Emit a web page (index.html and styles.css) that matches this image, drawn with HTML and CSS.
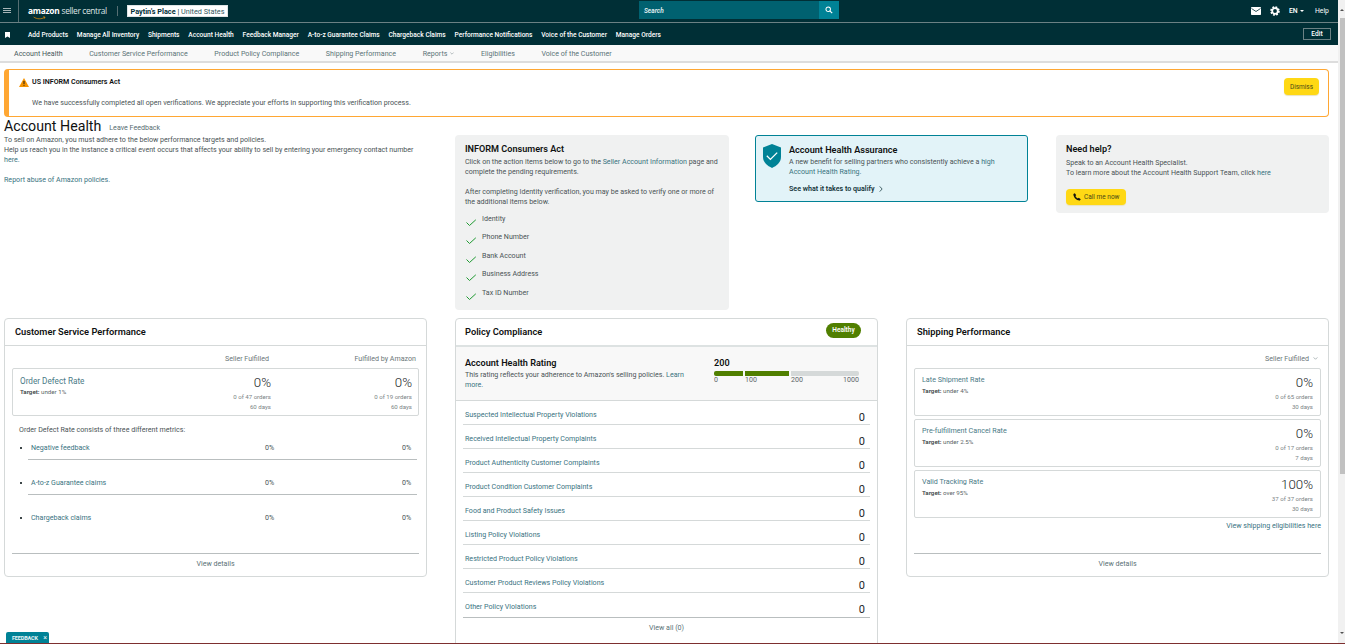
FILE: index.html
```html
<!DOCTYPE html>
<html lang="en">
<head>
<meta charset="utf-8">
<title>Account Health</title>
<link rel="stylesheet" href="styles.css">
</head>
<body>
<div class="screen">
  <div class="viewport">
    <div class="page">
      <header class="topbar">
        <div class="burger"><span></span><span></span><span></span></div>
        <div class="logo">
          <span class="logo-amazon">amazon</span><span class="logo-seller">seller central</span>
          <svg class="smile" viewBox="0 0 20 5"><path d="M1 1c5 3.500 12 3.500 17 .5M15.500 .8l3 .2-1 2.500" fill="none" stroke="#f90" stroke-width="1"/></svg>
        </div>
        <div class="store"><b>Paytin's Place</b> | <span>United States</span></div>
        <div class="search"><span class="search-text">Search</span>
          <span class="search-btn"><svg viewBox="0 0 10 10" width="8" height="8"><circle cx="4" cy="4" r="2.800" fill="none" stroke="#fff" stroke-width="1.300"/><path d="M6 6l3 3" stroke="#fff" stroke-width="1.500"/></svg></span>
        </div>
        <div class="tools">
          <svg class="mail" viewBox="0 0 10 8" width="10" height="8"><rect width="10" height="8" rx=".8" fill="#fff"/><path d="M.5 1.500L5 4.500l4.500-3" fill="none" stroke="#002f36" stroke-width=".8"/></svg>
          <svg class="gear" viewBox="0 0 10 10" width="10" height="10"><circle cx="5" cy="5" r="3.900" fill="none" stroke="#fff" stroke-width="1.800" stroke-dasharray="1.800 1.260"/><circle cx="5" cy="5" r="2.800" fill="none" stroke="#fff" stroke-width="1.800"/></svg>
          <span class="lang">EN<i class="caret"></i></span>
          <span class="help">Help</span>
        </div>
      </header>
      <nav class="mainnav">
        <svg class="bookmark" viewBox="0 0 5 6" width="5" height="6"><path d="M0 0h5v6L2.500 4.500 0 6z" fill="#fff"/></svg>
        <a>Add Products</a><a>Manage All Inventory</a><a>Shipments</a><a>Account Health</a><a>Feedback Manager</a><a>A-to-z Guarantee Claims</a><a>Chargeback Claims</a><a>Performance Notifications</a><a>Voice of the Customer</a><a>Manage Orders</a>
        <span class="edit">Edit</span>
      </nav>
      <nav class="subnav">
        <a class="current">Account Health</a><a>Customer Service Performance</a><a>Product Policy Compliance</a><a>Shipping Performance</a><a class="reports">Reports<svg viewBox="0 0 6 4" width="4" height="3"><path d="M.5 .5L3 3 5.500 .5" fill="none" stroke="#7a8a8c" stroke-width=".8"/></svg></a><a>Eligibilities</a><a>Voice of the Customer</a>
      </nav>

      <section class="alert">
        <div class="alert-main">
          <div class="alert-title">
            <svg viewBox="0 0 10 9" width="10" height="9"><path d="M5 0l5 9H0z" fill="#f59300"/><path d="M5 3v3M5 6.800v1" stroke="#111" stroke-width=".9"/></svg>
            <b>US INFORM Consumers Act</b>
          </div>
          <p>We have successfully completed all open verifications. We appreciate your efforts in supporting this verification process.</p>
        </div>
        <button class="yellow-btn dismiss">Dismiss</button>
      </section>

      <section class="top-row">
        <div class="intro">
          <div class="intro-head"><h1>Account Health</h1><a class="link-muted">Leave Feedback</a></div>
          <p>To sell on Amazon, you must adhere to the below performance targets and policies.</p>
          <p>Help us reach you in the instance a critical event occurs that affects your ability to sell by entering your emergency contact number <a class="link">here.</a></p>
          <p class="spaced"><a class="link">Report abuse of Amazon policies.</a></p>
        </div>

        <div class="panel inform">
          <h2>INFORM Consumers Act</h2>
          <p>Click on the action items below to go to the <a class="link">Seller Account Information</a> page and complete the pending requirements.</p>
          <p class="spaced">After completing Identity verification, you may be asked to verify one or more of the additional items below.</p>
          <ul class="checks">
            <li><svg viewBox="0 0 10 7" width="10" height="7"><path d="M.5 3.500l3 3L9.800 .8" fill="none" stroke="#1f9a32" stroke-width="1"/></svg><a>Identity</a></li>
            <li><svg viewBox="0 0 10 7" width="10" height="7"><path d="M.5 3.500l3 3L9.800 .8" fill="none" stroke="#1f9a32" stroke-width="1"/></svg><a>Phone Number</a></li>
            <li><svg viewBox="0 0 10 7" width="10" height="7"><path d="M.5 3.500l3 3L9.800 .8" fill="none" stroke="#1f9a32" stroke-width="1"/></svg><a>Bank Account</a></li>
            <li><svg viewBox="0 0 10 7" width="10" height="7"><path d="M.5 3.500l3 3L9.800 .8" fill="none" stroke="#1f9a32" stroke-width="1"/></svg><a>Business Address</a></li>
            <li><svg viewBox="0 0 10 7" width="10" height="7"><path d="M.5 3.500l3 3L9.800 .8" fill="none" stroke="#1f9a32" stroke-width="1"/></svg><a>Tax ID Number</a></li>
          </ul>
        </div>

        <div class="assurance">
          <svg class="shield" viewBox="0 0 18 24" width="18" height="24"><path d="M9 0l9 3.500V13c0 5.500-4.500 8.800-9 11-4.500-2.200-9-5.500-9-11V3.500z" fill="#008296"/><path d="M3.800 11.800l3.600 3.600 6.800-6.800" fill="none" stroke="#fff" stroke-width="1.300"/></svg>
          <div class="assurance-body">
            <h2>Account Health Assurance</h2>
            <p>A new benefit for selling partners who consistently achieve a <a class="link">high Account Health Rating.</a></p>
            <a class="qualify">See what it takes to qualify<svg viewBox="0 0 5 8" width="4" height="6"><path d="M.8 .5L4 4 .8 7.500" fill="none" stroke="#12333a" stroke-width="1"/></svg></a>
          </div>
        </div>

        <div class="panel need-help">
          <h2>Need help?</h2>
          <p>Speak to an Account Health Specialist.</p>
          <p>To learn more about the Account Health Support Team, click <a class="link">here</a></p>
          <button class="yellow-btn call"><svg viewBox="0 0 10 10" width="8" height="8"><path d="M2.300 .3L.5 1.400C.3 5.500 4.500 9.800 8.600 9.500l1.100-1.800-2.500-1.700-1.100 1C4.800 6.500 3.500 5.200 3 3.900l1-1.100z" fill="#111"/></svg>Call me now</button>
        </div>
      </section>

      <section class="cards">
        <article class="card">
          <h3 class="card-head">Customer Service Performance</h3>
          <div class="card-body">
            <div class="col-heads"><span class="col-a">Seller Fulfilled</span><span class="col-b">Fulfilled by Amazon</span></div>
            <div class="box odr">
              <div class="box-name"><a class="metric-name">Order Defect Rate</a><div class="target"><b>Target:</b> under 1%</div></div>
              <div class="stat col-stat-a"><div class="big">0%</div><div class="small">0 of 47 orders</div><div class="small">60 days</div></div>
              <div class="stat col-stat-b"><div class="big">0%</div><div class="small">0 of 19 orders</div><div class="small">60 days</div></div>
            </div>
            <p class="consists">Order Defect Rate consists of three different metrics:</p>
            <ul class="sub-metrics">
              <li><a class="link">Negative feedback</a><span class="pct-a">0%</span><span class="pct-b">0%</span></li>
              <li><a class="link">A-to-z Guarantee claims</a><span class="pct-a">0%</span><span class="pct-b">0%</span></li>
              <li><a class="link">Chargeback claims</a><span class="pct-a">0%</span><span class="pct-b">0%</span></li>
            </ul>
          </div>
          <a class="card-foot">View details</a>
        </article>

        <article class="card card-tall">
          <div class="card-head head-policy"><h3>Policy Compliance</h3><span class="pill">Healthy</span></div>
          <div class="rating">
            <div class="rating-text"><h4>Account Health Rating</h4><p>This rating reflects your adherence to Amazon's selling policies. <a class="link">Learn more.</a></p></div>
            <div class="rating-meter">
              <b>200</b>
              <div class="bar"><i class="seg seg1"></i><i class="seg seg2"></i><i class="seg seg3"></i></div>
              <div class="bar-labels"><span class="l1">0</span><span class="l2">100</span><span class="l3">200</span><span class="l4">1000</span></div>
            </div>
          </div>
          <ul class="violations">
            <li><a class="link">Suspected Intellectual Property Violations</a><span>0</span></li>
            <li><a class="link">Received Intellectual Property Complaints</a><span>0</span></li>
            <li><a class="link">Product Authenticity Customer Complaints</a><span>0</span></li>
            <li><a class="link">Product Condition Customer Complaints</a><span>0</span></li>
            <li><a class="link">Food and Product Safety Issues</a><span>0</span></li>
            <li><a class="link">Listing Policy Violations</a><span>0</span></li>
            <li><a class="link">Restricted Product Policy Violations</a><span>0</span></li>
            <li><a class="link">Customer Product Reviews Policy Violations</a><span>0</span></li>
            <li><a class="link">Other Policy Violations</a><span>0</span></li>
          </ul>
          <a class="card-foot">View all (0)</a>
        </article>

        <article class="card">
          <h3 class="card-head">Shipping Performance</h3>
          <div class="card-body ship-body">
            <div class="ship-filter">Seller Fulfilled<svg viewBox="0 0 6 4" width="5" height="3"><path d="M.5 .5L3 3 5.500 .5" fill="none" stroke="#7a8a8c" stroke-width=".8"/></svg></div>
            <div class="box ship">
              <div class="box-name"><a class="metric-name">Late Shipment Rate</a><div class="target"><b>Target:</b> under 4%</div></div>
              <div class="stat"><div class="big">0%</div><div class="small">0 of 65 orders</div><div class="small">30 days</div></div>
            </div>
            <div class="box ship">
              <div class="box-name"><a class="metric-name">Pre-fulfillment Cancel Rate</a><div class="target"><b>Target:</b> under 2.5%</div></div>
              <div class="stat"><div class="big">0%</div><div class="small">0 of 17 orders</div><div class="small">7 days</div></div>
            </div>
            <div class="box ship">
              <div class="box-name"><a class="metric-name">Valid Tracking Rate</a><div class="target"><b>Target:</b> over 95%</div></div>
              <div class="stat"><div class="big">100%</div><div class="small">37 of 37 orders</div><div class="small">30 days</div></div>
            </div>
            <a class="link ship-link">View shipping eligibilities here</a>
          </div>
          <a class="card-foot">View details</a>
        </article>
      </section>
    </div>
    <div class="scrollbar"><i class="arrow-up"></i><i class="thumb"></i><i class="arrow-down"></i></div>
  </div>
  <div class="bottom-line"></div>
  <div class="feedback-tab"><b>FEEDBACK</b><span>×</span></div>
</div>
</body>
</html>
```
FILE: styles.css
```css
* { box-sizing: border-box; }
html, body { margin: 0; height: 100%; overflow: hidden; background: #fff; }
body { font: 7.1px/10px Roboto, "Noto Sans", Arial, sans-serif; color: #4a5456; }
p, h1, h2, h3, h4, ul { margin: 0; padding: 0; }
ul { list-style: none; }
a { color: inherit; text-decoration: none; }
button { font-family: inherit; border: 0; padding: 0; }
.screen { height: 644px; display: flex; flex-direction: column; }
.viewport { flex: 1; min-height: 0; display: flex; overflow: hidden; }
.page { width: 1338px; flex: none; overflow: hidden; }
.bottom-line { height: 1px; flex: none; background: #7d2f2f; }

.scrollbar { flex: 1; background: #f1f1f1; display: flex; flex-direction: column; align-items: flex-end; position: relative; }
.thumb { display: block; width: 5px; height: 456px; margin-top: 18px; background: #c1c1c1; }
.arrow-up, .arrow-down { position: absolute; right: 1px; width: 0; height: 0; border-left: 2px solid transparent; border-right: 2px solid transparent; }
.arrow-up { top: 9px; border-bottom: 2px solid #505050; }
.arrow-down { bottom: 9px; border-top: 2px solid #505050; }

.topbar { height: 23px; background: #002f36; border-bottom: 1px solid #6b8184; display: flex; align-items: center; color: #fff; }
.burger { width: 19px; height: 22px; padding: 8px 7px 0 3px; border-right: 1px solid #566f73; flex: none; }
.burger span { display: block; height: 1px; background: #a9b6b8; margin-bottom: 1px; }
.logo { margin-left: 9px; width: 90px; border-right: 1px solid #566f73; display: flex; align-items: center; position: relative; height: 10px; flex: none; white-space: nowrap; }
.logo-amazon { font: 700 8.4px/10px "Noto Sans", sans-serif; letter-spacing: -.25px; }
.logo-seller { font: 400 8.4px/10px "Open Sans", sans-serif; margin-left: 2px; color: #dfe5e6; letter-spacing: -.35px; }
.smile { position: absolute; left: 5px; top: 10px; width: 13px; height: 4px; }
.store { margin-left: 9px; width: 101px; height: 12px; background: #fff; color: #002f36; font: 7.3px/11px Roboto, sans-serif; text-align: center; border: 1px solid #dfe5e6; white-space: nowrap; }
.store span { color: #33595f; }
.search { margin-left: 411px; width: 200px; height: 18px; background: #006170; display: flex; align-items: center; justify-content: space-between; margin-top: -2px; flex: none; }
.search-text { padding: 2px 0 0 5px; font: italic 600 6.5px/10px Roboto, sans-serif; color: #e6f2f3; }
.search-btn { width: 20px; height: 18px; background: #008296; display: flex; align-items: center; justify-content: center; }
.tools { margin-left: 412px; display: flex; align-items: center; font-size: 6.8px; width: 78px; }
.gear { margin-left: 9px; }
.lang { margin-left: 9px; display: flex; align-items: center; width: 17px; font-weight: 500; }
.caret { margin-left: 2px; border-left: 2px solid transparent; border-right: 2px solid transparent; border-top: 2px solid #fff; }
.help { margin-left: 9px; }

.mainnav { height: 22px; padding-top: 1px; background: #002f36; color: #fff; display: flex; align-items: center; padding-left: 5px; font: 500 6.6px/10px Roboto, sans-serif; white-space: nowrap; }
.bookmark { margin-right: 18px; flex: none; }
.mainnav a { margin-right: 8.800px; }
.edit { position: absolute; left: 1303px; top: 28px; width: 28px; height: 12px; border: 1px solid #6b8184; text-align: center; line-height: 10px; }

.subnav { height: 18px; padding: 1px 0 0 14px; background: #f9f9f9; border-bottom: 2px solid #ddd; display: flex; align-items: center; gap: 26.600px; color: #5b7478; white-space: nowrap; }
.subnav .current { color: #47595c; }
.reports svg { margin-left: 3px; vertical-align: 1px; }

.alert { margin: 6px 0 0 4px; width: 1325px; height: 48px; border: 1px solid #ffa733; border-left-width: 5px; border-radius: 4px; display: flex; justify-content: space-between; padding: 7px 9px 0 10px; }
.alert-title { display: flex; align-items: center; gap: 3px; height: 10px; color: #0f1111; }
.alert-title b { font-weight: 600; }
.alert-main p { margin: 11px 0 0 13px; }
.yellow-btn { background: #ffd814; border-radius: 4px; color: #4b4a17; font-size: 6.500px; box-shadow: 0 1px 1px #e9e3c0; }
.dismiss { width: 35px; height: 17px; margin-top: 1px; }

.top-row { height: 201px; padding-left: 4px; display: flex; align-items: flex-start; }
.intro { width: 423px; padding-top: 1px; padding-right: 4px; flex: none; }
.intro-head { height: 16px; display: flex; align-items: center; gap: 8px; }
h1 { font: 400 14.2px/16px Roboto, sans-serif; color: #0f1111; }
.link-muted { color: #566d71; margin-top: 4px; }
.intro p { position: relative; top: 1px; }
.spaced { margin-top: 10px; }
.link { color: #39737f; }
.panel { background: #f0f1f1; border-radius: 4px; margin-top: 18px; flex: none; }
h2 { font: 600 9.100px/12px Roboto, sans-serif; color: #0f1111; }
.inform { width: 274px; height: 175px; margin-left: 28px; padding: 8px 10px; }
.inform h2 { margin-bottom: 2px; }
.checks { margin-top: 2.500px; }
.checks li { height: 18.500px; display: flex; align-items: flex-start; padding: 4px 0 0 1px; gap: 6px; }
.checks svg { margin-top: 5px; flex: none; }
.assurance { width: 273px; height: 67px; margin: 18px 0 0 26px; background: #e2f3f8; border: 1px solid #008296; border-radius: 3px; display: flex; flex: none; padding: 8px 7px; }
.shield { flex: none; margin-right: 8px; }
.assurance h2 { margin-bottom: 1px; }
.assurance-body p { width: 232px; }
.qualify { display: block; margin-top: 7px; font-weight: 600; color: #12333a; }
.qualify svg { margin-left: 4px; vertical-align: -1px; }
.need-help { width: 273px; height: 78px; margin-left: 28px; padding: 8px 10px; }
.need-help h2 { margin-bottom: 3px; }
.call { display: flex; align-items: center; gap: 3px; width: 60px; height: 16px; margin-top: 11px; padding-left: 7px; }

.cards { padding-left: 4px; display: flex; justify-content: space-between; width: 1329px; align-items: flex-start; }
.card { width: 423px; height: 259px; border: 1px solid #d5d9d9; border-radius: 4px; display: flex; flex-direction: column; position: relative; }
.card-tall { height: 340px; }
.card-head { height: 27px; flex: none; border-bottom: 1px solid #d5d9d9; padding: 0 10px; font: 600 9.300px/26px Roboto, sans-serif; color: #0f1111; }
h3 { font: inherit; }
.head-policy { display: flex; justify-content: space-between; align-items: center; height: 28px; border-bottom: 2px solid #dde2e2; padding: 0 16px 1px 10px; }
.head-policy h3 { margin-left: -1px; }
.pill { background: #507f00; color: #fff; width: 35px; height: 15px; margin-top: -3px; border-radius: 8px; text-align: center; font: 600 6.500px/14px Roboto, sans-serif; }
.card-body { flex: 1; padding: 8px 7px 0; }
.col-heads { position: relative; height: 10px; color: #6b7779; }
.col-a, .col-b { position: absolute; }
.col-a { right: 150px; }
.col-b { right: 3px; }
.box { border: 1px solid #d5d9d9; border-radius: 2px; position: relative; display: flex; justify-content: space-between; }
.odr { margin-top: 4px; height: 48px; padding: 7px 6px 0 7px; }
.box-name { line-height: 10px; }
.metric-name { font-size: 7.200px; color: #4a7a86; display: block; }
.odr .metric-name { font-size: 8.200px; }
.target { font-size: 6.200px; line-height: 10px; color: #5d6668; margin-top: 1px; }
.target b { font-weight: 600; color: #3d4749; }
.stat { text-align: right; color: #7a8385; }
.big { font: 300 13.300px/14px Roboto, sans-serif; color: #1c2628; margin-bottom: 2px; }
.small { font-size: 6.100px; line-height: 10px; }
.odr .col-stat-a { position: absolute; right: 147px; top: 7px; }
.odr .col-stat-b { position: absolute; right: 6px; top: 7px; }
.consists { margin: 9px 0 0 7px; }
.sub-metrics { margin-top: 3px; }
.sub-metrics li { height: 35px; position: relative; padding: 5px 0 0 19px; }
.sub-metrics li::before { content: ""; position: absolute; left: 8px; top: 9px; width: 2px; height: 2px; background: #3d4749; }
.sub-metrics li:nth-child(-n+2)::after { content: ""; position: absolute; left: 16px; right: 2px; top: 20.500px; height: 1px; background: #b9bebf; }
.sub-metrics span { position: absolute; top: 5px; }
.pct-a { left: 253px; }
.pct-b { left: 390px; }
.card-foot { margin: 0 7px; height: 23px; flex: none; border-top: 1px solid #b9bebf; text-align: center; color: #5a7276; line-height: 20px; }
.rating { height: 54px; flex: none; background: #f8f8f8; border-bottom: 1px solid #d5d9d9; padding: 10px 18px 0 9px; display: flex; justify-content: space-between; }
.rating-text { width: 228px; }
h4 { font: 600 9.100px/12px Roboto, sans-serif; color: #0f1111; margin-bottom: 1px; }
.rating-meter { width: 145px; }
.rating-meter b { display: block; font: 600 9.100px/12px Roboto, sans-serif; color: #0f1111; }
.bar { display: flex; gap: 2px; height: 5px; margin-top: 2px; }
.seg { display: block; }
.seg1 { width: 29px; background: #507f00; border-radius: 2px 0 0 2px; }
.seg2 { width: 44px; background: #507f00; }
.seg3 { width: 68px; background: #d5d9d9; border-radius: 0 2px 2px 0; }
.bar-labels { position: relative; height: 8px; line-height: 8px; color: #5d6668; }
.bar-labels span { position: absolute; top: 0; }
.l1 { left: 0; } .l2 { left: 31px; } .l3 { left: 77px; } .l4 { left: 129px; }
.violations { margin: 0 7px; }
.violations li { height: 24px; border-bottom: 1px solid #d5d9d9; padding: 9px 5px 0 2px; display: flex; justify-content: space-between; }
.violations li:last-child { border-bottom: 0; }
.violations span { font: 400 11px/14px Roboto, sans-serif; color: #1c2628; margin-top: -1px; padding-top: 2px; }
.ship-filter { height: 10px; padding-right: 3px; text-align: right; color: #6b7779; }
.ship-filter svg { margin-left: 4px; vertical-align: 1px; }
.ship { height: 48px; margin-bottom: 3px; padding: 6px 7px 0 7px; }
.ship-filter + .ship { margin-top: 4px; }
.ship .big { margin-top: 1px; }
.ship-link { display: block; text-align: right; margin-top: 3px; }
.feedback-tab { position: fixed; left: 6px; bottom: 1px; width: 43px; height: 11px; background: #008296; border-radius: 2px 2px 0 0; color: #e8f4f6; display: flex; justify-content: space-between; align-items: center; padding: 0 2px 0 6px; font-size: 5.500px; }
.feedback-tab b { font-weight: 700; letter-spacing: -.15px; }
.feedback-tab span { font-size: 7px; }
```
